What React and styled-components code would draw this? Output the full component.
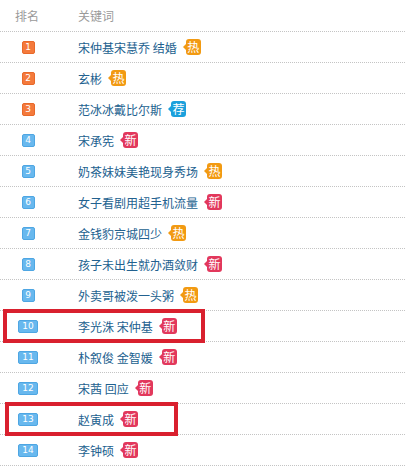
import React from "react";
import styled, { createGlobalStyle } from "styled-components";

const GlobalStyle = createGlobalStyle`
  body {
    margin: 0;
    background: #fff;
    font-family: "Microsoft YaHei", "Noto Sans CJK SC", "Noto Sans", sans-serif;
  }
`;

const List = styled.div`
  width: 405px;
  font-size: 12px;
`;

const Row = styled.div`
  position: relative;
  display: flex;
  align-items: center;
  height: ${(p) => (p.head ? "31px" : "30px")};
  border-bottom: 1px dotted #c4c4c4;
  color: ${(p) => (p.head ? "#9a9a9a" : "#22618f")};
`;

const RankCell = styled.div`
  width: 56px;
  display: flex;
  justify-content: center;
  ${(p) => p.head && "justify-content: flex-start; padding-left: 15px; width: 41px;"}
`;

const KeyCell = styled.div`
  padding-left: 22px;
  display: flex;
  align-items: center;
  white-space: pre;
`;

const RankBadge = styled.span`
  display: inline-block;
  box-sizing: border-box;
  min-width: 13px;
  height: 13px;
  padding: 0 2px;
  line-height: 11px;
  font-size: 9px;
  font-family: "DejaVu Sans", sans-serif;
  text-align: center;
  color: #fff;
  border-radius: 2px;
  background: ${(p) => (p.top ? "#f47a3c" : "#68b8ee")};
  border: 1px solid ${(p) => (p.top ? "#e8692a" : "#4ea6e3")};
  ${(p) => p.wide && "min-width: 20px;"}
`;

const tagColors = {
  热: "#f29a12",
  荐: "#1ba0dc",
  新: "#e2385c",
};

const Tag = styled.span`
  position: relative;
  display: inline-block;
  margin-left: ${(p) => p.gap}px;
  width: 15px;
  height: 16px;
  line-height: 16px;
  text-align: center;
  font-size: 12px;
  color: #fff;
  border-radius: 3px;
  background: ${(p) => tagColors[p.kind]};
  &::before {
    content: "";
    position: absolute;
    left: -3px;
    top: 5px;
    border-style: solid;
    border-width: 3px 3px 3px 0;
    border-color: transparent ${(p) => tagColors[p.kind]} transparent transparent;
  }
`;

const Highlight = styled.div`
  position: absolute;
  top: -2px;
  left: ${(p) => p.left}px;
  width: ${(p) => p.width}px;
  height: 34px;
  box-sizing: border-box;
  border: 4px solid #d9202e;
  pointer-events: none;
`;

const rows = [
  { kw: "宋仲基宋慧乔 结婚", tag: "热" },
  { kw: "玄彬", tag: "热" },
  { kw: "范冰冰戴比尔斯", tag: "荐" },
  { kw: "宋承宪", tag: "新" },
  { kw: "奶茶妹妹美艳现身秀场", tag: "热" },
  { kw: "女子看剧用超手机流量", tag: "新" },
  { kw: "金钱豹京城四少", tag: "热" },
  { kw: "孩子未出生就办酒敛财", tag: "新" },
  { kw: "外卖哥被泼一头粥", tag: "热" },
  { kw: "李光洙 宋仲基", tag: "新", box: { left: 3, width: 202 } },
  { kw: "朴叙俊 金智媛", tag: "新" },
  { kw: "宋茜 回应", tag: "新" },
  { kw: "赵寅成", tag: "新", box: { left: 5, width: 173 } },
  { kw: "李钟硕", tag: "新" },
];

export default function App() {
  return (
    <List>
      <GlobalStyle />
      <Row head>
        <RankCell head>排名</RankCell>
        <KeyCell>关键词</KeyCell>
      </Row>
      {rows.map((r, i) => (
        <Row key={i}>
          <RankCell>
            <RankBadge top={i < 3} wide={i >= 9}>
              {i + 1}
            </RankBadge>
          </RankCell>
          <KeyCell>
            {r.kw}
            <Tag kind={r.tag} gap={9}>
              {r.tag}
            </Tag>
          </KeyCell>
          {r.box && <Highlight left={r.box.left} width={r.box.width} />}
        </Row>
      ))}
    </List>
  );
}
